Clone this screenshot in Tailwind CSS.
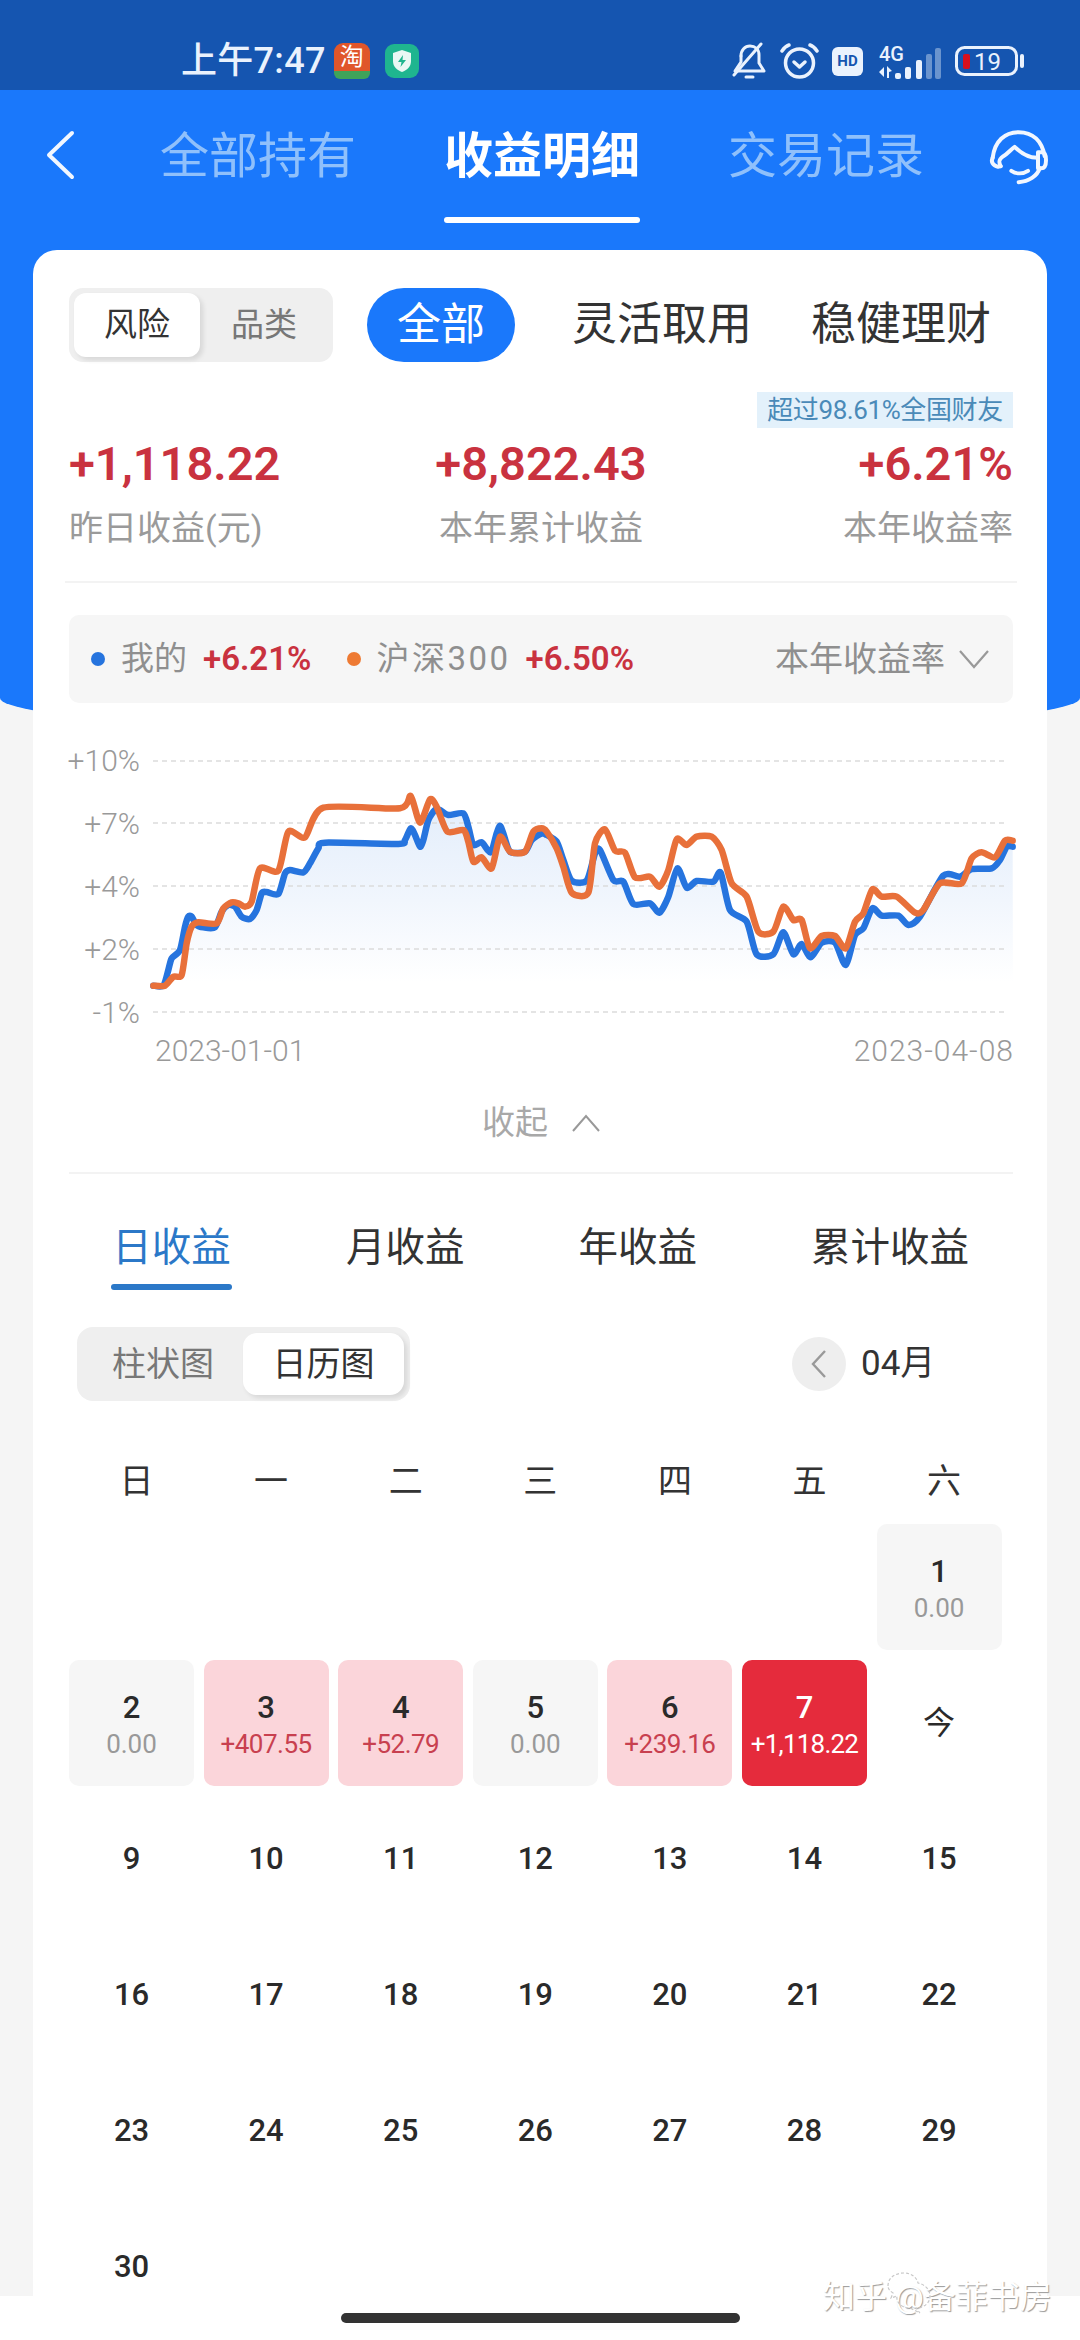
<!DOCTYPE html>
<html lang="zh-CN">
<head>
  <meta charset="UTF-8" />
  <meta name="viewport" content="width=device-width, initial-scale=1.0"/>
  <title>收益明细</title>
  <script src="https://cdn.jsdelivr.net/npm/@tailwindcss/browser@4"></script>
</head>
<body class="font-[Roboto,'Noto_Sans_CJK_SC',sans-serif]">
<div class="relative w-[1080px] h-[2340px] overflow-hidden bg-[#f5f5f5] flex flex-col">

  <!-- blue backdrop behind the card -->
  <div class="absolute left-0 top-[90px] w-full h-[643px] bg-[#1a78fb] rounded-b-[540px_35px]"></div>

  <!-- Status bar -->
  <div class="relative h-[90px] bg-[#1555b0] flex items-center justify-between pl-[181px] pr-[56px] pt-[32px] text-[#eaf2fd]">
    <div class="flex items-center">
      <span class="text-[36px] leading-[44px] font-medium tracking-[0.3px]">上午7:47</span>
      <div class="ml-[8px] w-[36px] h-[36px] flex flex-col items-center">
        <span class="w-full h-[28px] rounded-t-[9px] bg-[#e0562a] text-[24px] leading-[28px] text-center text-white">淘</span>
        <span class="w-full h-[8px] rounded-b-[6px] bg-[#3fa35a]"></span>
      </div>
      <svg class="ml-[15px]" width="34" height="34" viewBox="0 0 34 34">
        <rect width="34" height="34" rx="9" fill="#1fb58f"/>
        <path d="M17 6 L26 9 V17 C26 23 22 26 17 28 C12 26 8 23 8 17 V9 Z" fill="#eaf8f4"/>
        <path d="M18 11 L13 18 H16.5 L15.5 23 L21 16 H17.5 Z" fill="#1fb58f"/>
      </svg>
    </div>
    <div class="flex items-center">
      <svg width="34" height="38" viewBox="0 0 34 38" fill="none" stroke="#eaf2fd" stroke-width="3" stroke-linecap="round" stroke-linejoin="round">
        <path d="M9 14 C9 8 13 4 18 4 C23 4 27 7 27 13 V21 L32 29 H5"/>
        <path d="M9 14 V20 L3 29"/>
        <path d="M29 2 L2 33"/>
        <path d="M14 35 H21"/>
      </svg>
      <svg class="ml-[14px]" width="39" height="36" viewBox="0 0 39 36" fill="none" stroke="#eaf2fd" stroke-width="3.5" stroke-linecap="round" stroke-linejoin="round">
        <circle cx="19.5" cy="20" r="14"/>
        <path d="M2 8 C4 5 6 3 9 2"/>
        <path d="M37 8 C35 5 33 3 30 2"/>
        <path d="M14 19 L19.5 24 L25 19"/>
      </svg>
      <div class="ml-[13px] w-[31px] h-[29px] rounded-[6px] bg-[#eaf2fd] text-[#1555b0] text-[15px] leading-[29px] font-bold text-center">HD</div>
      <svg class="ml-[12px]" width="66" height="42" viewBox="0 -6 66 42">
        <text x="4" y="15" font-size="20" font-weight="500" fill="#eaf2fd">4G</text>
        <path d="M4 26 L9 21 V31 Z M12 20 L17 25 L14 26 V32 H12 Z" fill="#eaf2fd"/>
        <rect x="20" y="27" width="6" height="6" rx="2" fill="#eaf2fd"/>
        <rect x="30" y="21" width="6" height="12" rx="2" fill="#eaf2fd"/>
        <rect x="41" y="14" width="6" height="19" rx="2" fill="#eaf2fd"/>
        <rect x="51" y="8" width="6" height="25" rx="2" fill="#eaf2fd" fill-opacity="0.4"/>
        <rect x="60" y="2" width="6" height="31" rx="2" fill="#eaf2fd" fill-opacity="0.4"/>
      </svg>
      <svg class="ml-[14px]" width="69" height="30" viewBox="0 0 69 30">
        <rect x="1.5" y="1.5" width="60" height="27" rx="8" fill="none" stroke="#eaf2fd" stroke-width="3"/>
        <rect x="8" y="8" width="7" height="15" rx="2" fill="#d8101c"/>
        <text x="19" y="24" font-size="24" fill="#eaf2fd">19</text>
        <rect x="65" y="8" width="4" height="14" rx="2" fill="#eaf2fd"/>
      </svg>
    </div>
  </div>

  <!-- Nav -->
  <div class="relative h-[160px] flex">
    <svg class="absolute left-[44px] top-[40px]" width="32" height="50" viewBox="0 0 32 50" fill="none" stroke="#f2f7ff" stroke-width="4" stroke-linecap="round" stroke-linejoin="round">
      <path d="M28 3 L5 25 L28 47"/>
    </svg>
    <div class="pl-[160px] pt-[37px] flex gap-[88px] text-[49px] leading-[60px] text-[#8fc0fb]">
      <span>全部持有</span>
      <div class="flex flex-col items-center">
        <span class="text-white font-semibold">收益明细</span>
        <span class="mt-[30px] w-[196px] h-[6px] rounded-full bg-white"></span>
      </div>
      <span>交易记录</span>
    </div>
    <svg class="absolute left-[988px] top-[39px]" width="60" height="56" viewBox="0 0 180 165" fill="none" stroke="#f2f7ff" stroke-width="12" stroke-linecap="round" stroke-linejoin="round">
      <path d="M14 85 C20 35 50 8 92 8 C135 8 162 35 170 80"/>
      <path d="M14 85 C8 96 14 108 30 112 L38 110"/>
      <path d="M38 110 C30 95 34 88 46 80 C60 72 68 60 80 52 C100 72 125 85 148 85"/>
      <path d="M150 68 H162 C172 68 174 76 174 92 C174 108 170 116 160 116 H150 Z"/>
      <path d="M70 124 C85 134 105 134 120 124"/>
      <path d="M155 116 C148 140 122 156 92 158"/>
    </svg>
  </div>

  <!-- Card -->
  <div class="relative mx-[33px] h-[2046px] bg-white rounded-t-[24px] pl-[36px] pr-[34px] overflow-hidden">

    <div class="mt-[38px] flex items-center h-[74px]">
      <div class="w-[264px] h-[74px] p-[5px] rounded-[14px] bg-[#efefef] flex items-stretch text-[33px]">
        <span class="w-[126px] rounded-[12px] bg-white shadow-[3px_3px_5px_rgba(0,0,0,0.1)] flex items-center justify-center text-[#333]">风险</span>
        <span class="flex-1 flex items-center justify-center text-[#777]">品类</span>
      </div>
      <span class="ml-[34px] w-[148px] h-[74px] rounded-full bg-[#1a78fb] text-white text-[44px] flex items-center justify-center">全部</span>
      <span class="ml-[57px] text-[45px] text-[#333]">灵活取用</span>
      <span class="ml-[59px] text-[45px] text-[#333]">稳健理财</span>
    </div>

    <div class="mt-[30px] flex justify-end">
      <span class="w-[256px] h-[36px] bg-[#e3f1fb] text-[#4a8ab8] text-[26px] leading-[36px] text-center tracking-[-0.4px]">超过98.61%全国财友</span>
    </div>

    <div class="mt-[8px] grid grid-cols-3 text-[47px] leading-[56px] font-semibold text-[#c9323f]">
      <span>+1,118.22</span>
      <span class="text-center">+8,822.43</span>
      <span class="text-right">+6.21%</span>
    </div>
    <div class="mt-[14px] grid grid-cols-3 text-[34px] leading-[44px] text-[#9a9a9a]">
      <span>昨日收益(元)</span>
      <span class="text-center">本年累计收益</span>
      <span class="text-right">本年收益率</span>
    </div>

    <div class="mt-[31px] h-[2px] -mx-[4px] bg-[#f3f3f3]"></div>

    <!-- Legend -->
    <div class="mt-[32px] h-[88px] rounded-[10px] bg-[#f6f6f6] flex items-center pl-[22px] pr-[24px]">
      <span class="w-[14px] h-[14px] rounded-full bg-[#2674de]"></span>
      <span class="ml-[16px] text-[33px] text-[#8f8f8f]">我的</span>
      <span class="ml-[16px] text-[33px] font-semibold text-[#c9323f]">+6.21%</span>
      <span class="ml-[36px] w-[14px] h-[14px] rounded-full bg-[#ee7a33]"></span>
      <span class="ml-[15px] text-[33px] text-[#8f8f8f] tracking-[2.5px]">沪深300</span>
      <span class="ml-[15px] text-[33px] font-semibold text-[#c9323f]">+6.50%</span>
      <span class="ml-auto text-[34px] text-[#8f8f8f]">本年收益率</span>
      <svg class="ml-[14px]" width="30" height="20" viewBox="0 0 30 20" fill="none" stroke="#999" stroke-width="2.2"><path d="M1 2 L15 18 L29 2"/></svg>
    </div>

    <!-- Chart -->
    <div class="-ml-[36px] -mr-[34px] h-[380px]">
      <svg id="chart" class="block" width="1014" height="380" viewBox="33 703 1014 380">
        <defs>
          <linearGradient id="area" x1="0" y1="0" x2="0" y2="1">
            <stop offset="0" stop-color="#e4eefb"/>
            <stop offset="0.45" stop-color="#f1f6fd"/>
            <stop offset="0.85" stop-color="#ffffff"/>
          </linearGradient>
        </defs>
        <path id="fill-my" fill="url(#area)"></path>
        <g stroke="#dcdcdc" stroke-width="1.5" stroke-dasharray="5 4">
          <line x1="153" x2="1008" y1="761" y2="761"/>
          <line x1="153" x2="1008" y1="823" y2="823"/>
          <line x1="153" x2="1008" y1="886" y2="886"/>
          <line x1="153" x2="1008" y1="949" y2="949"/>
          <line x1="153" x2="1008" y1="1012" y2="1012"/>
        </g>
        <g class="fill-[#999999] text-[30px] font-light" text-anchor="end">
          <text x="140" y="771">+10%</text>
          <text x="140" y="834">+7%</text>
          <text x="140" y="897">+4%</text>
          <text x="140" y="960">+2%</text>
          <text x="140" y="1023">-1%</text>
          <text x="1014" y="1061" class="tracking-[1px]">2023-04-08</text>
        </g>
        <text x="155" y="1061" class="fill-[#999999] text-[30px] font-light">2023-01-01</text>
        <path id="line-my" fill="none" stroke="#2674de" stroke-width="6.5" stroke-linejoin="round" stroke-linecap="round"></path>
        <path id="line-hs" fill="none" stroke="#e8703a" stroke-width="6.5" stroke-linejoin="round" stroke-linecap="round"></path>
      </svg>
    </div>

    <div class="h-[79px] mb-[10px] flex items-center justify-center text-[33px] text-[#a8a8a8]">
      <span>收起</span>
      <svg class="ml-[24px]" width="28" height="18" viewBox="0 0 28 18" fill="none" stroke="#999" stroke-width="2"><path d="M1 17 L14 2 L27 17"/></svg>
    </div>
    <div class="h-[2px] bg-[#f3f3f3]"></div>

    <!-- Tabs -->
    <div class="mt-[49px] pl-[42px] flex gap-[114px] text-[39.5px] leading-[50px] text-[#333]">
      <div class="flex flex-col items-center">
        <span class="text-[#2b78c8]">日收益</span>
        <span class="mt-[11px] w-[121px] h-[6px] rounded-full bg-[#2b78c8]"></span>
      </div>
      <span>月收益</span>
      <span>年收益</span>
      <span>累计收益</span>
    </div>

    <!-- Toggle + month -->
    <div class="mt-[37px] ml-[8px] flex items-center h-[74px]">
      <div class="w-[333px] h-[74px] p-[6px] rounded-[16px] bg-[#efefef] flex items-stretch justify-end text-[34px]">
        <span class="flex-1 flex items-center justify-center text-[#777]">柱状图</span>
        <span class="w-[161px] rounded-[14px] bg-white shadow-[3px_3px_5px_rgba(0,0,0,0.1)] flex items-center justify-center text-[#333]">日历图</span>
      </div>
      <span class="ml-[382px] w-[54px] h-[54px] rounded-full bg-[#eeeeee] flex items-center justify-center">
        <svg width="16" height="30" viewBox="0 0 16 30" fill="none" stroke="#999" stroke-width="2.4"><path d="M14 2 L2 15 L14 28"/></svg>
      </span>
      <span class="ml-[15px] text-[35px] text-[#333]">04月</span>
    </div>

    <!-- Weekdays -->
    <div class="mt-[58px] ml-[5px] grid grid-cols-[repeat(7,125px)] gap-x-[9.6px] text-[34px] leading-[44px] text-[#333] text-center">
      <span>日</span><span>一</span><span>二</span><span>三</span><span>四</span><span>五</span><span>六</span>
    </div>

    <!-- Calendar -->
    <div class="mt-[21px] grid grid-cols-[repeat(7,125px)] auto-rows-[126px] gap-x-[9.6px] gap-y-[10px] text-center text-[31px] font-medium text-[#2a2a2a]">
      <span></span><span></span><span></span><span></span><span></span><span></span>
      <div class="rounded-[10px] bg-[#f6f6f6] flex flex-col items-center justify-center pt-[6px]"><span class="leading-[36px]">1</span><span class="text-[26px] leading-[36px] font-normal text-[#999]">0.00</span></div>

      <div class="rounded-[10px] bg-[#f6f6f6] flex flex-col items-center justify-center pt-[6px]"><span class="leading-[36px]">2</span><span class="text-[26px] leading-[36px] font-normal text-[#999]">0.00</span></div>
      <div class="rounded-[10px] bg-[#fbd5da] flex flex-col items-center justify-center pt-[6px]"><span class="leading-[36px]">3</span><span class="text-[26px] leading-[36px] font-normal text-[#c8404f] tracking-[-0.5px]">+407.55</span></div>
      <div class="rounded-[10px] bg-[#fbd5da] flex flex-col items-center justify-center pt-[6px]"><span class="leading-[36px]">4</span><span class="text-[26px] leading-[36px] font-normal text-[#c8404f] tracking-[-0.5px]">+52.79</span></div>
      <div class="rounded-[10px] bg-[#f6f6f6] flex flex-col items-center justify-center pt-[6px]"><span class="leading-[36px]">5</span><span class="text-[26px] leading-[36px] font-normal text-[#999]">0.00</span></div>
      <div class="rounded-[10px] bg-[#fbd5da] flex flex-col items-center justify-center pt-[6px]"><span class="leading-[36px]">6</span><span class="text-[26px] leading-[36px] font-normal text-[#c8404f] tracking-[-0.5px]">+239.16</span></div>
      <div class="rounded-[10px] bg-[#e52b3c] text-white flex flex-col items-center justify-center pt-[6px]"><span class="leading-[36px]">7</span><span class="text-[26px] leading-[36px] font-normal tracking-[-0.8px]">+1,118.22</span></div>
      <div class="flex items-center justify-center text-[32px] font-normal">今</div>

      <div class="flex items-center justify-center">9</div><div class="flex items-center justify-center">10</div><div class="flex items-center justify-center">11</div><div class="flex items-center justify-center">12</div><div class="flex items-center justify-center">13</div><div class="flex items-center justify-center">14</div><div class="flex items-center justify-center">15</div>
      <div class="flex items-center justify-center">16</div><div class="flex items-center justify-center">17</div><div class="flex items-center justify-center">18</div><div class="flex items-center justify-center">19</div><div class="flex items-center justify-center">20</div><div class="flex items-center justify-center">21</div><div class="flex items-center justify-center">22</div>
      <div class="flex items-center justify-center">23</div><div class="flex items-center justify-center">24</div><div class="flex items-center justify-center">25</div><div class="flex items-center justify-center">26</div><div class="flex items-center justify-center">27</div><div class="flex items-center justify-center">28</div><div class="flex items-center justify-center">29</div>
      <div class="flex items-center justify-center">30</div>
    </div>
  </div>

  <!-- Bottom strip -->
  <div class="relative flex-1 bg-white flex justify-center pt-[17px]">
    <span class="w-[399px] h-[10px] rounded-full bg-[#333]"></span>
  </div>

  <!-- Watermark -->
  <div class="absolute left-[823px] top-[2277px] text-[32px] leading-[40px] text-white [text-shadow:1px_1px_1px_#9a9a9a] whitespace-nowrap">知乎 @备菲书房</div>
  <svg class="absolute left-[886px] top-[2270px]" width="46" height="44" viewBox="0 0 46 44" fill="none" stroke="#c8c8c8" stroke-width="1.2" stroke-dasharray="3 2">
    <path d="M2 16 C2 7 10 3 18 3 C26 3 31 8 32 13 C38 14 44 19 44 26 C44 33 38 38 30 38 L34 43 L24 38 C14 38 10 31 11 26 L5 28 L7 23 C4 21 2 19 2 16 Z"/>
  </svg>
</div>

<script>
  // points read off the picture, given as [x, y] in the 3x crops: first the left crop, then the right one
  const myLeft = [[340,797],[370,797],[385,750],[395,715],[420,690],[435,620],[445,590],[455,590],[470,615],[490,622],[525,622],[545,575],[565,555],[585,560],[605,590],[630,597],[650,570],[665,520],[680,516],[715,522],[735,460],[750,450],[790,457],[810,430],[835,385],[855,368],[1075,372],[1095,360],[1112,325],[1125,345],[1140,380],[1150,360],[1165,300],[1185,270],[1200,270],[1225,285],[1270,280],[1285,320],[1300,375],[1325,367],[1352,397],[1370,340],[1380,317],[1390,340],[1410,395],[1455,395],[1475,360],[1505,340]];
  const myRight = [[20,345],[50,365],[70,420],[95,482],[140,482],[165,400],[180,390],[220,480],[250,485],[280,552],[330,550],[358,578],[385,530],[412,445],[440,503],[470,483],[520,485],[542,458],[570,570],[620,605],[650,703],[700,703],[730,637],[760,703],[785,672],[812,712],[845,668],[885,668],[917,735],[945,645],[970,625],[997,565],[1025,587],[1075,587],[1105,615],[1140,590],[1210,467],[1260,470],[1295,447],[1355,445],[1380,420],[1400,380],[1418,380]];
  const hsLeft = [[340,797],[375,797],[400,770],[425,765],[440,670],[455,620],[475,607],[530,610],[550,565],[575,547],[595,550],[615,560],[635,545],[660,445],[715,452],[745,335],[795,352],[850,263],[1080,265],[1112,228],[1140,308],[1170,238],[1190,260],[1222,335],[1270,330],[1285,365],[1300,425],[1325,412],[1355,445],[1380,350],[1410,395],[1455,395],[1480,335],[1505,325]];
  const hsRight = [[20,335],[50,385],[70,440],[95,518],[145,518],[165,370],[195,328],[225,392],[255,398],[285,472],[330,470],[358,500],[385,450],[410,358],[440,375],[470,350],[515,350],[545,390],[575,490],[620,530],[655,635],[700,635],[730,560],[760,600],[785,600],[810,685],[845,648],[885,648],[917,685],[945,605],[970,580],[997,508],[1025,530],[1070,530],[1125,578],[1150,570],[1200,490],[1265,490],[1295,415],[1325,397],[1365,412],[1395,362],[1418,362]];

  function toPage(left, right) {
    return left.map(p => [40 + p[0] / 3, 720 + p[1] / 3])
      .concat(right.map(p => [540 + p[0] / 3, 720 + p[1] / 3]));
  }

  function smoothPath(pts) {
    let d = "M" + pts[0][0] + " " + pts[0][1];
    for (let i = 0; i < pts.length - 1; i++) {
      const a = pts[i - 1] || pts[i], b = pts[i], c = pts[i + 1], e = pts[i + 2] || c;
      const k = 0.12;
      d += " C" + (b[0] + (c[0] - a[0]) * k) + " " + (b[1] + (c[1] - a[1]) * k) + " " +
        (c[0] - (e[0] - b[0]) * k) + " " + (c[1] - (e[1] - b[1]) * k) + " " + c[0] + " " + c[1];
    }
    return d;
  }

  const my = toPage(myLeft, myRight);
  const hs = toPage(hsLeft, hsRight);
  document.getElementById("line-my").setAttribute("d", smoothPath(my));
  document.getElementById("line-hs").setAttribute("d", smoothPath(hs));
  document.getElementById("fill-my").setAttribute("d", smoothPath(my) + " L1013 1012 L153 1012 Z");
</script>
</body>
</html>
